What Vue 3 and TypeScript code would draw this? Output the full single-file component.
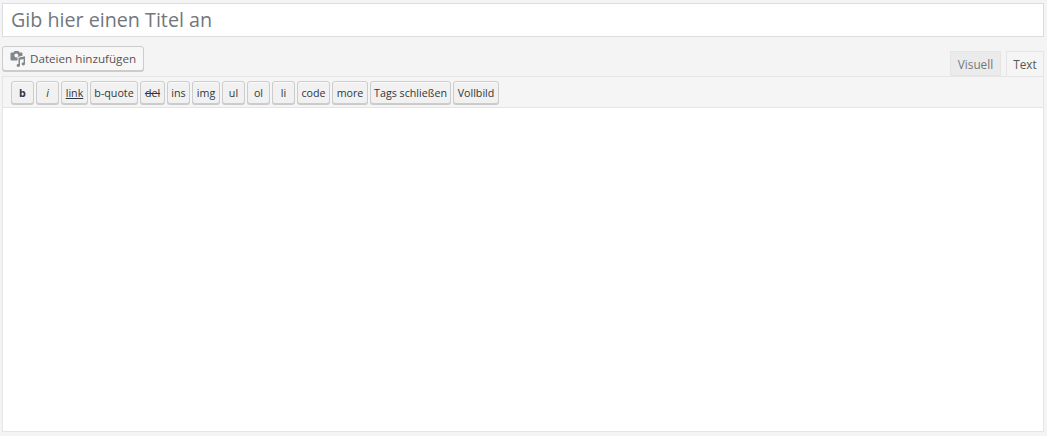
<script setup lang="ts">
interface Tool { label: string; width: number; cls?: string }
const tools: Tool[] = [
  { label: 'b', width: 23, cls: 'bold' },
  { label: 'i', width: 23, cls: 'ital' },
  { label: 'link', width: 27, cls: 'link' },
  { label: 'b-quote', width: 48 },
  { label: 'del', width: 25, cls: 'del' },
  { label: 'ins', width: 23 },
  { label: 'img', width: 28 },
  { label: 'ul', width: 23 },
  { label: 'ol', width: 23 },
  { label: 'li', width: 23 },
  { label: 'code', width: 33 },
  { label: 'more', width: 36 },
  { label: 'Tags schließen', width: 81 },
  { label: 'Vollbild', width: 46 },
]
</script>

<template>
  <div class="page">
    <div class="title">Gib hier einen Titel an</div>
    <div class="head">
      <button class="media">
        <svg class="icon" width="16" height="16" viewBox="0 0 16 16" aria-hidden="true">
          <path fill="#82878c" d="M1.500 1.500H3.500L4.500 0H8.500L9.500 1.500H11.500A1 1 0 0 1 12.500 2.500V4.700L7.500 6V9.500H1.500A1 1 0 0 1 .5 8.500V2.500A1 1 0 0 1 1.500 1.500Z" />
          <circle cx="6.300" cy="4.500" r="1.900" fill="#f7f7f7" />
          <path fill="#82878c" d="M8.500 6.800 15 5.300V13A1.700 1.500 0 1 1 13.600 11.500V8L10 8.800V14.500A1.700 1.500 0 1 1 8.500 13Z" />
        </svg>
        <span>Dateien hinzufügen</span>
      </button>
      <div class="tabs">
        <div class="tab off">Visuell</div>
        <div class="tab on">Text</div>
      </div>
    </div>
    <div class="editor">
      <div class="toolbar">
        <button v-for="t in tools" :key="t.label" class="tool" :class="t.cls" :style="{ width: t.width + 'px' }">{{ t.label }}</button>
      </div>
      <div class="area"></div>
    </div>
  </div>
</template>

<style>
html, body { margin: 0; background: #f4f4f4; }
</style>

<style scoped>
.page {
  width: 1047px;
  height: 436px;
  box-sizing: border-box;
  padding: 3px 3px 0 2px;
  background: #f4f4f4;
  font-family: "Open Sans", "Liberation Sans", sans-serif;
  overflow: hidden;
}
.title {
  height: 34px;
  box-sizing: border-box;
  border: 1px solid #dddddd;
  background: #fff;
  padding: 0 8px;
  font-size: 19.700px;
  line-height: 32px;
  color: #72777c;
}
.head {
  display: flex;
  justify-content: space-between;
  align-items: flex-end;
  height: 39px;
}
.media {
  display: flex;
  align-items: center;
  gap: 4px;
  height: 25px;
  width: 142px;
  box-sizing: border-box;
  margin-bottom: 5px;
  padding: 0 7px;
  border: 1px solid #cccccc;
  border-radius: 3px;
  background: #f7f7f7;
  box-shadow: 0 1px 0 #cccccc;
  color: #555;
  font: 11.650px "Open Sans", sans-serif;
  white-space: nowrap;
}
.icon { flex: none; }
.tabs { display: flex; gap: 5px; }
.tab {
  height: 25px;
  box-sizing: border-box;
  border: 1px solid #e5e5e5;
  border-bottom: 0;
  font-size: 11.750px;
  line-height: 24px;
  text-align: center;
}
.off { width: 51px; background: #ebebeb; color: #72777c; border-bottom: 1px solid #e5e5e5; }
.on { width: 38px; background: #f5f5f5; color: #555; }
.editor {
  height: 356px;
  box-sizing: border-box;
  border: 1px solid #e5e5e5;
  display: flex;
  flex-direction: column;
}
.toolbar {
  display: flex;
  gap: 2px;
  height: 31px;
  box-sizing: border-box;
  padding: 4px 0 0 8px;
  background: #f5f5f5;
  border-bottom: 1px solid #e5e5e5;
}
.tool {
  height: 23px;
  box-sizing: border-box;
  padding: 0;
  border: 1px solid #cccccc;
  border-radius: 3px;
  background: #f1f1f1;
  box-shadow: inset 0 1px 0 #fbfbfb, 0 1px 0 #cccccc;
  color: #32373c;
  font: 10.700px/20px "Open Sans", sans-serif;
  white-space: nowrap;
  text-align: center;
}
.bold { font-weight: 700; }
.ital { font-style: italic; }
.link { text-decoration: underline; }
.del { text-decoration: line-through; }
.area { flex: 1; background: #fff; }
</style>
